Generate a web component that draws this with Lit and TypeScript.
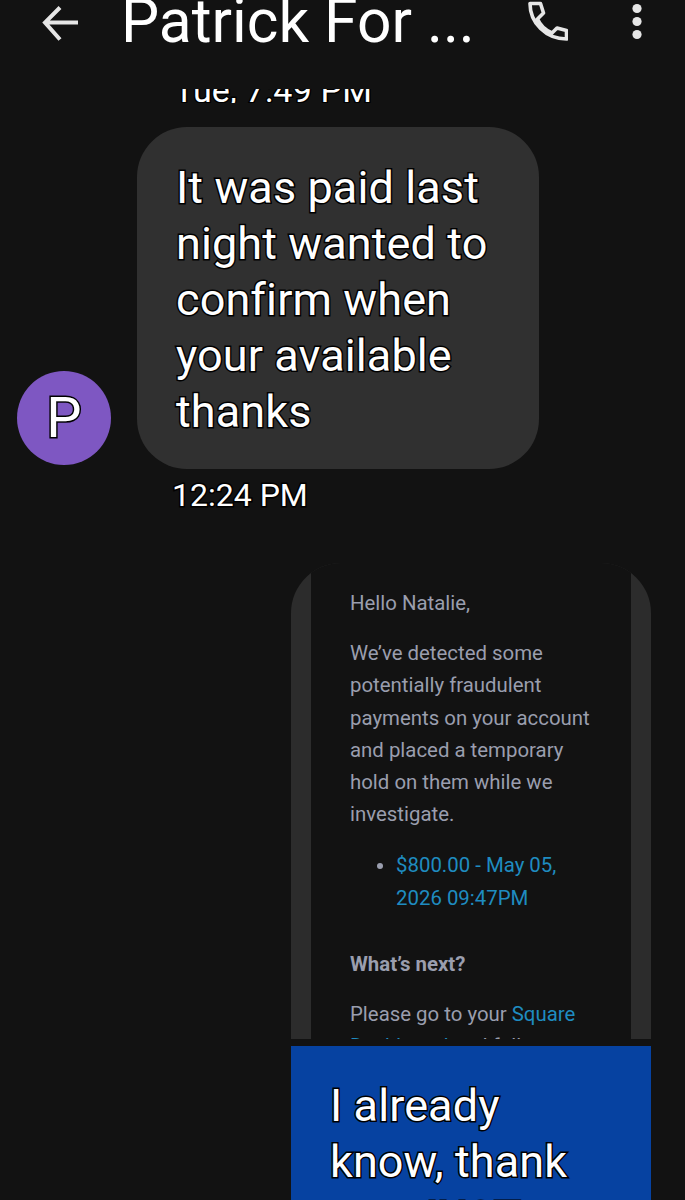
import { LitElement, html, css } from 'lit';
import { customElement } from 'lit/decorators.js';

@customElement('app-root')
export class AppRoot extends LitElement {
  static styles = css`
    :host {
      display: block;
      width: 685px;
      height: 1200px;
      overflow: hidden;
      background: #121212;
      font-family: Roboto, 'Noto Sans', sans-serif;
      color: #fff;
    }
    .outlined {
      -webkit-text-stroke: 3px #000;
      paint-order: stroke fill;
    }
    .bar {
      height: 50px;
      display: flex;
      align-items: center;
      padding-left: 40px;
      color: #e6e6e6;
    }
    .bar svg {
      display: block;
      flex: none;
    }
    .back {
      width: 40px;
      height: 40px;
      margin-bottom: 7px;
    }
    .title {
      flex: none;
      width: 407px;
      margin: 0 0 6px 41px;
      font-size: 60.5px;
      line-height: 50px;
      color: #fff;
      white-space: nowrap;
    }
    .phone {
      width: 40px;
      height: 40px;
      margin-bottom: 9px;
    }
    .dots {
      width: 12px;
      height: 40px;
      margin: 0 0 9px 63px;
    }
    .day {
      height: 14px;
      margin: 39px 0 24px 174px;
      overflow: hidden;
      font-size: 34px;
      letter-spacing: 0.2px;
      line-height: 2px;
      white-space: nowrap;
    }
    .incoming {
      display: flex;
      align-items: flex-end;
      gap: 26px;
      padding-left: 17px;
    }
    .avatar {
      width: 94px;
      height: 94px;
      margin-bottom: 4px;
      border-radius: 50%;
      background: #7e57c2;
      display: flex;
      align-items: center;
      justify-content: center;
      font-size: 56px;
    }
    .bubble {
      box-sizing: border-box;
      padding: 33px 39px 29px;
      font-size: 45px;
      letter-spacing: 0.1px;
      line-height: 56px;
    }
    .them {
      width: 402px;
      border-radius: 50px;
      background: #303030;
    }
    .time {
      margin: 6px 0 48px 172px;
      font-size: 32px;
      line-height: 40px;
    }
    .outgoing {
      display: flex;
      flex-direction: column;
      align-items: flex-end;
      gap: 7px;
      padding-right: 34px;
    }
    .attachment {
      box-sizing: border-box;
      width: 360px;
      height: 476px;
      padding: 0 20px;
      overflow: hidden;
      border-radius: 50px 50px 0 0;
      background: #2c2c2c;
    }
    .email {
      height: 100%;
      padding: 24px 39px 0;
      overflow: hidden;
      background: #121212;
      color: #9a9eae;
      font-size: 20.4px;
      line-height: 32.2px;
    }
    .email p {
      margin: 0 0 18px;
    }
    .email ul {
      margin: 19px 0 34px;
      padding-left: 46px;
    }
    .email a {
      color: #1f8cc0;
      text-decoration: none;
    }
    .email li::marker {
      color: #9a9eae;
    }
    .email b {
      font-weight: 700;
    }
    .me {
      width: 360px;
      padding-top: 32px;
      background: #0642a1;
    }
  `;

  render() {
    return html`
      <div class="bar">
        <svg class="back" viewBox="0 0 40 40" fill="none" stroke="currentColor" stroke-width="4">
          <path d="M38 20.5H6M20 5.5 5 20.5l15 17" />
        </svg>
        <div class="title">Patrick For ...</div>
        <svg class="phone" viewBox="0 0 40 40" fill="none" stroke="currentColor" stroke-width="3.6" stroke-linejoin="round">
          <path d="M2 2.5h10.5L15.5 12l-6 6c2.500 6 7.500 11 14.500 14l5-5 9.500 2.500V38C18 38 2 22 2 2.500Z" />
        </svg>
        <svg class="dots" viewBox="0 0 12 40" fill="currentColor">
          <circle cx="6" cy="7.500" r="4.600" />
          <circle cx="6" cy="20.500" r="4.600" />
          <circle cx="6" cy="33.500" r="4.600" />
        </svg>
      </div>
      <div class="day outlined">Tue, 7:49 PM</div>
      <div class="incoming">
        <div class="avatar"><span class="outlined">P</span></div>
        <div class="bubble them outlined">It was paid last night wanted to confirm when your available thanks</div>
      </div>
      <div class="time outlined">12:24 PM</div>
      <div class="outgoing">
        <div class="attachment">
          <div class="email">
            <p>Hello Natalie,</p>
            <p>We’ve detected some potentially fraudulent payments on your account and placed a temporary hold on them while we investigate.</p>
            <ul>
              <li><a>$800.00 - May 05, 2026 09:47PM</a></li>
            </ul>
            <p><b>What’s next?</b></p>
            <p>Please go to your <a>Square Dashboard</a> and follow</p>
          </div>
        </div>
        <div class="bubble me outlined">I already know, thank you JUST</div>
      </div>
    `;
  }
}
